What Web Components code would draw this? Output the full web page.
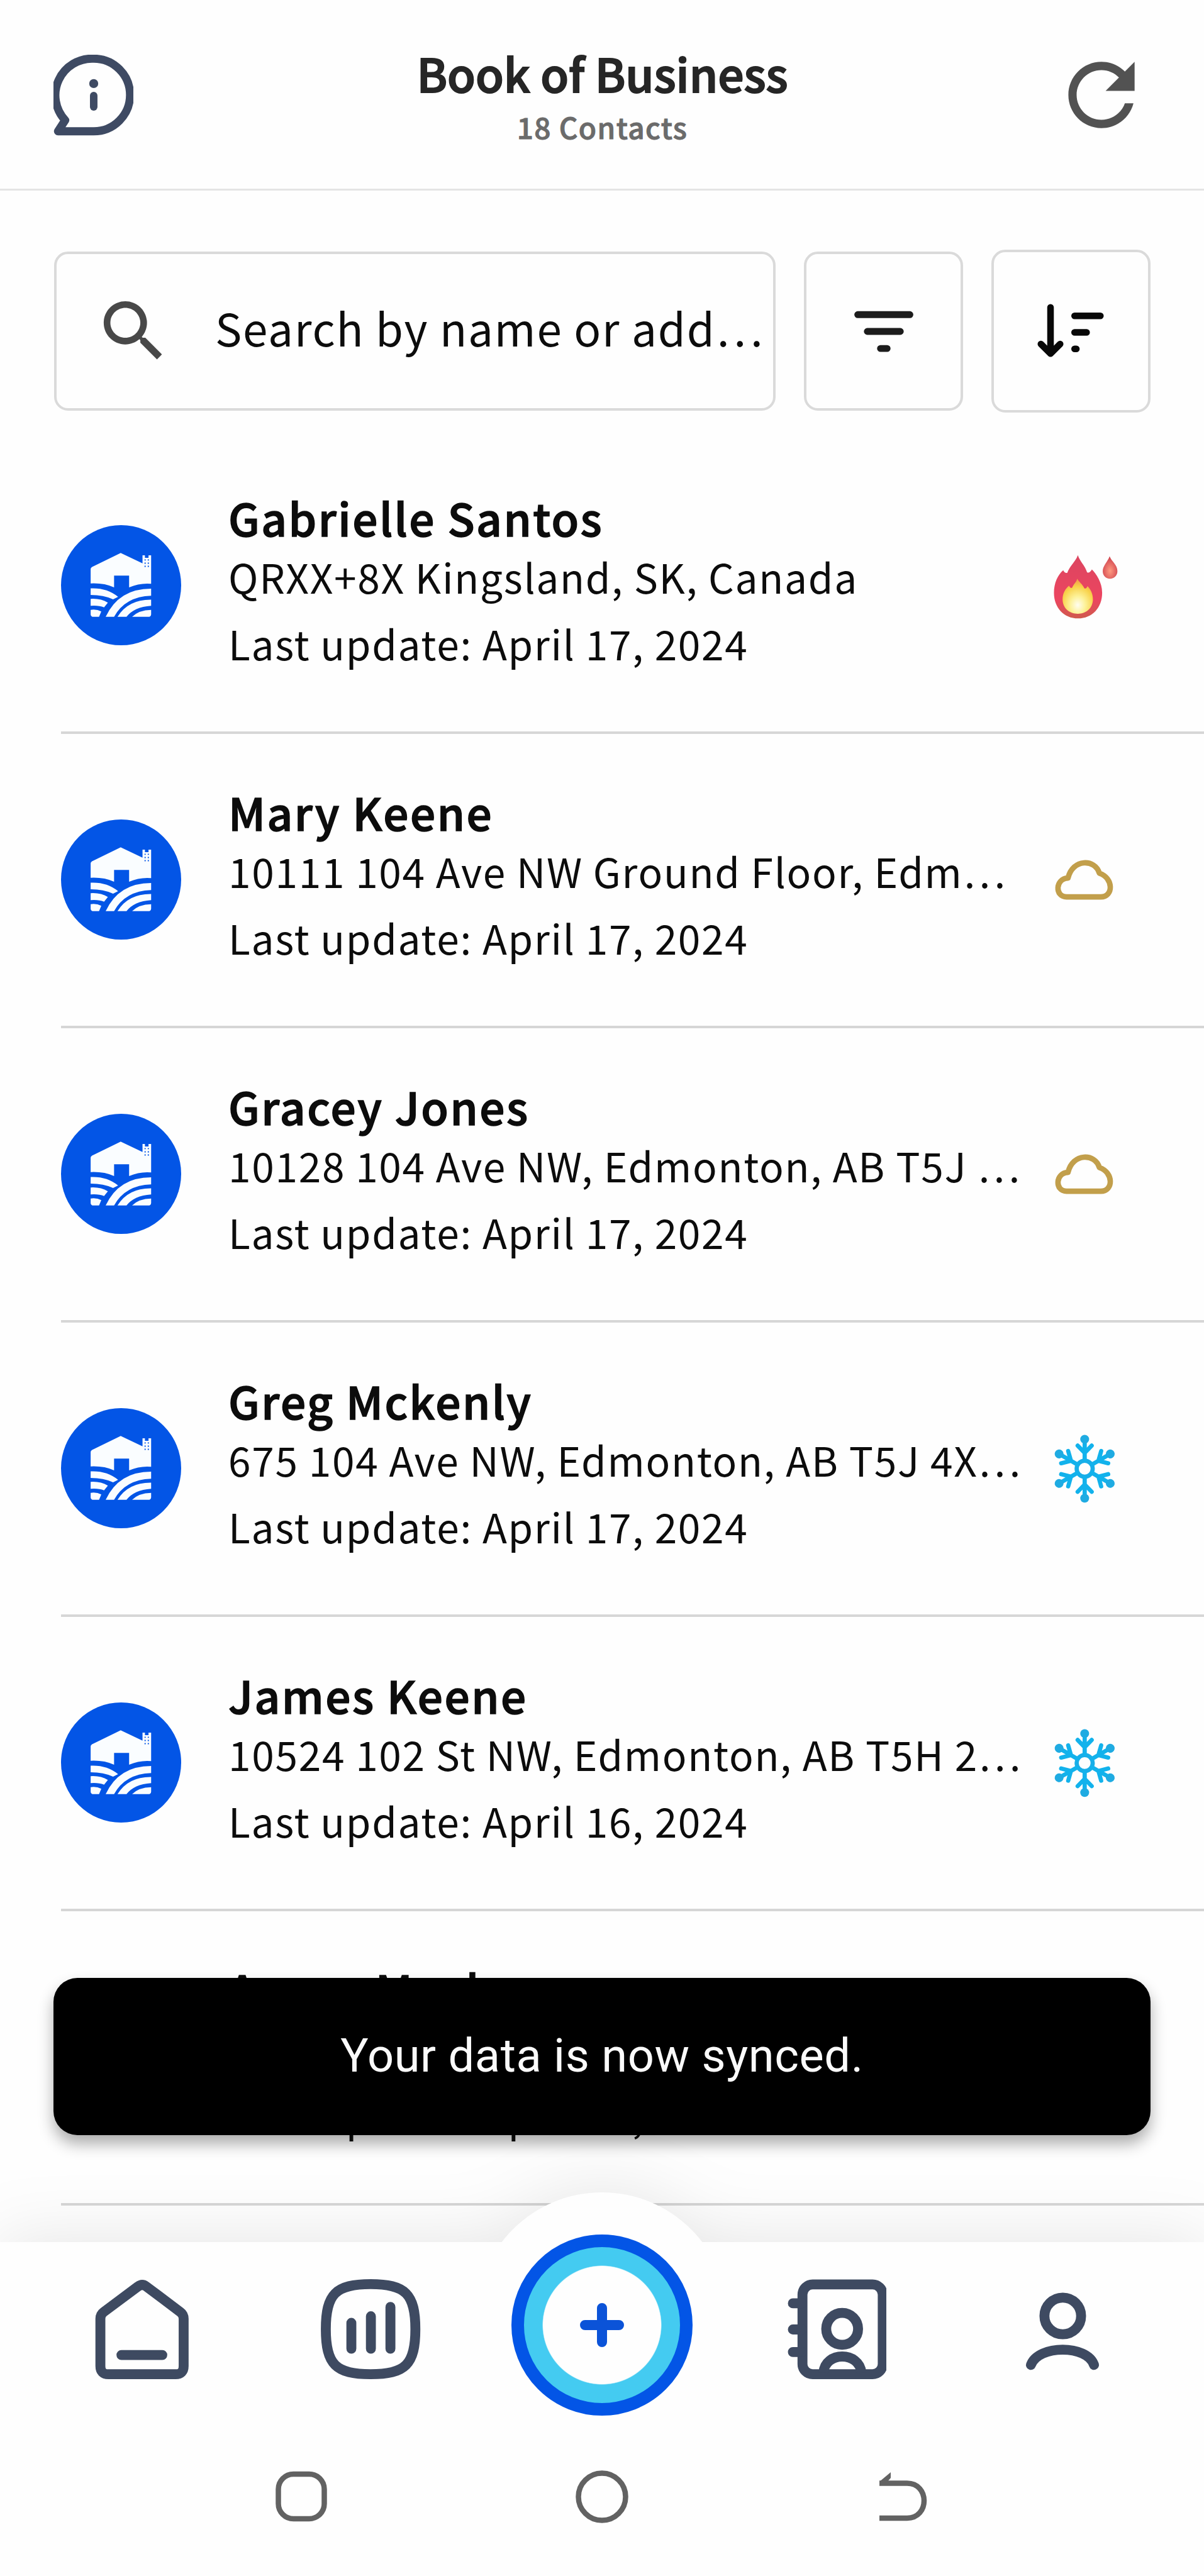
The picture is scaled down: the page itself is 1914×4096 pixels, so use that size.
<!DOCTYPE html>
<html lang="en">
<head>
<meta charset="utf-8">
<title>Book of Business</title>
<style>
    body {
        margin: 0;
        background: #fefefe;
        font-family: "Noto Sans CJK SC", "Noto Sans", sans-serif;
        color: #0c0c0c;
    }
</style>
</head>
<body>
<book-app>
    <app-header slot="header" heading="Book of Business" count="18 Contacts"></app-header>
    <search-bar slot="search">Search by name or add…</search-bar>

    <contact-row name="Gabrielle Santos" address="QRXX+8X Kingsland, SK, Canada" updated="April 17, 2024" status="hot"></contact-row>
    <contact-row name="Mary Keene" address="10111 104 Ave NW Ground Floor, Edm…" updated="April 17, 2024" status="warm"></contact-row>
    <contact-row name="Gracey Jones" address="10128 104 Ave NW, Edmonton, AB T5J …" updated="April 17, 2024" status="warm"></contact-row>
    <contact-row name="Greg Mckenly" address="675 104 Ave NW, Edmonton, AB T5J 4X…" updated="April 17, 2024" status="cold"></contact-row>
    <contact-row name="James Keene" address="10524 102 St NW, Edmonton, AB T5H 2…" updated="April 16, 2024" status="cold"></contact-row>
    <contact-row name="Aaron Mack" address="" updated="April 16, 2024" covered></contact-row>

    <toast-message slot="toast">Your data is now synced.</toast-message>
    <bottom-nav slot="nav"></bottom-nav>
    <system-nav slot="system"></system-nav>
</book-app>

<script>
const makeTemplate = (html) => {
    const template = document.createElement('template');
    template.innerHTML = html;
    return template;
};

// ---------- icons ----------
const snowArm = `
    <path d="M425 198V105M425 163L390 127M425 163L460 127" fill="none" stroke="#12b2ec" stroke-width="21" stroke-linecap="round"/>
    <circle cx="425" cy="95" r="22" fill="#1fabe2"/>`;

const icons = {
    info: ['89 91 133 135', `
        <path d="M156 97.500a60 60 0 0 1 0 121H96.500L108.500 200A61 61 0 0 1 156 97.500Z" fill="none" stroke="#3e4a63" stroke-width="13.500" stroke-linejoin="round"/>
        <circle cx="156" cy="139" r="7.500" fill="#3e4a63"/>
        <path d="M156 159v19" stroke="#3e4a63" stroke-width="12.500" stroke-linecap="round"/>`],
    refresh: ['0 0 24 24', `<path fill="#525252" d="M17.650 6.350C16.200 4.900 14.210 4 12 4c-4.420 0-7.990 3.580-7.990 8s3.570 8 7.990 8c3.730 0 6.840-2.550 7.730-6h-2.080c-.82 2.330-3.040 4-5.650 4-3.310 0-6-2.690-6-6s2.690-6 6-6c1.660 0 3.140.69 4.220 1.780L13 11h7V4l-2.350 2.350z"/>`],
    search: ['0 0 24 24', `<path fill="#484848" d="M15.500 14h-.79l-.28-.27C15.410 12.590 16 11.110 16 9.500 16 5.910 13.090 3 9.500 3S3 5.910 3 9.500 5.910 16 9.500 16c1.610 0 3.090-.59 4.230-1.570l.27.28v.79l5 4.990L20.490 19l-4.990-5zm-6 0C7.010 14 5 11.990 5 9.500S7.010 5 9.500 5 14 7.010 14 9.500 11.990 14 9.500 14z"/>`],
    filter: ['0 0 100 84', `<g stroke="#1c1c1c" stroke-width="11.500" stroke-linecap="round"><path d="M6.500 14h87M22.500 42h55M44.500 70.500h11"/></g>`],
    sort: ['0 0 112 92', `
        <g fill="none" stroke="#080808" stroke-width="11" stroke-linecap="round" stroke-linejoin="round">
            <path d="M22 6v76M6 67l16 16 16-16"/>
            <path d="M62 20h43M62 47.500h20M62 75h3"/>
        </g>`],
    hot: ['236 91 376 376', `
        <defs>
            <linearGradient id="outer" x1="0" y1="0" x2="0" y2="1"><stop offset="0" stop-color="#dc4560"/><stop offset=".7" stop-color="#ec4560"/><stop offset="1" stop-color="#cf5a4c"/></linearGradient>
            <radialGradient id="inner" cx=".5" cy=".75" r=".7"><stop offset="0" stop-color="#fffdf0"/><stop offset=".35" stop-color="#fdf29a"/><stop offset=".75" stop-color="#f8d24a"/><stop offset="1" stop-color="#f3a24c"/></radialGradient>
            <radialGradient id="spark" cx=".5" cy=".65" r=".6"><stop offset="0" stop-color="#ff9a80"/><stop offset="1" stop-color="#d0444f"/></radialGradient>
        </defs>
        <path fill="url(#outer)" d="M391 128C402 160 425 178 437 213C444 218 452 214 461 199C482 220 512 262 512 315C512 390 462 443 392 443C322 443 272 390 272 315C272 268 290 227 318 203C323 213 330 218 338 216C352 180 380 160 391 128Z"/>
        <path fill="url(#inner)" d="M388 245C398 262 412 270 423 292C430 297 435 291 439 282C455 298 466 320 466 348C466 390 434 420 391 420C347 420 315 390 315 348C315 318 328 296 347 280C352 290 357 294 363 289C370 270 383 264 388 245Z"/>
        <path fill="url(#spark)" d="M549 133C560 160 588 175 588 207C588 230 572 245 551 245C530 245 515 230 515 207C515 180 540 160 549 133Z"/>`],
    warm: ['236 57 376 376', `<path fill="none" stroke="#c29f4b" stroke-width="27" stroke-linejoin="round" d="M335 330H505C569 330 570 236 498 212C478 140 365 138 342 236C278 238 275 330 335 330Z"/>`],
    cold: ['236 53 376 376', `
        <circle cx="425" cy="242" r="40" fill="none" stroke="#18aee8" stroke-width="21"/>
        ${[0, 60, 120, 180, 240, 300].map(a => `<g transform="rotate(${a} 425 242)">${snowArm}</g>`).join('')}`],
    house: ['17 15 600 600', `
        <circle cx="317" cy="315" r="300" fill="#0355e6"/>
        <g fill="#fafdff">
            <path d="M165 234Q165 228 172 224L315 154L424 206V166H436V178H454V166H467V308Q410 303 357 326V267H282V326Q232 303 165 306Z"/>
            <path d="M165 331Q245 327 302 373L277 386Q230 364 165 364Z"/>
            <path d="M165 383Q215 380 251 402L232 426Q205 415 165 418Z"/>
            <path d="M165 438Q195 434 218 446L207 473H180Q165 473 165 460Z"/>
            <path d="M240 473Q305 332 467 332V368Q338 372 282 473Z"/>
            <path d="M299 473Q352 386 467 387V418Q382 424 344 473Z"/>
            <path d="M372 473Q405 439 467 438V460Q467 473 452 473Z"/>
        </g>
        <g fill="#0355e6">
            <path d="M434 186h6v6h-6zM450 186h6v6h-6zM434 202h6v6h-6zM450 202h6v6h-6zM434 218h6v6h-6zM450 218h6v6h-6z"/>
        </g>`],
    home: ['146 3780 180 180', `<path d="M229 3798.500L172 3841Q166.500 3845 166.500 3852V3931Q166.500 3944.500 180 3944.500H291.500Q305 3944.500 305 3931V3852Q305 3845 299.500 3841L243 3798.500Q236 3793 229 3798.500ZM201.500 3912.500H269.500"/>`],
    chart: ['528 3780 180 180', `
        <path d="M615 3794.500C673 3794.500 689.500 3811 689.500 3869.500C689.500 3928 673 3944.500 615 3944.500C557 3944.500 540.500 3928 540.500 3869.500C540.500 3811 557 3794.500 615 3794.500Z"/>
        <path d="M583 3859V3902M615.500 3848V3902M648 3832.500V3902"/>`],
    book: ['1292.500 3780 180 180', `
        <rect x="1333" y="3795" width="133.500" height="149.500" rx="17"/>
        <path d="M1317 3826.500H1332M1317 3870H1332M1317 3907.500H1332"/>
        <circle cx="1399" cy="3869" r="26.500"/>
        <path stroke-linecap="butt" d="M1368 3942C1370 3906 1428 3906 1431 3942"/>`],
    person: ['1675 3780 180 180', `
        <circle cx="1765.500" cy="3847.500" r="30.500"/>
        <path d="M1712.500 3929C1725 3895 1806 3895 1817.500 3929"/>`],
};

class UiIcon extends HTMLElement {
    constructor() {
        super();
        this.attachShadow({mode: 'open'});
    }

    connectedCallback() {
        const [viewBox, shapes] = icons[this.getAttribute('name')];
        this.shadowRoot.innerHTML = `
            <style>
                :host { display: block; flex: none; }
                svg { display: block; width: 100%; height: 100%; }
            </style>
            <svg viewBox="${viewBox}">${shapes}</svg>
        `;
    }
}

// ---------- page shell ----------
const appTemplate = makeTemplate(`
    <style>
        :host {
            display: flex;
            flex-direction: column;
            position: relative;
            width: 1914px;
            height: 4096px;
            overflow: hidden;
        }
        main {
            height: 2866px;
            flex: none;
            overflow: hidden;
        }
        /* toast floats over the list */
        ::slotted([slot="toast"]) {
            position: absolute;
            left: 85px;
            right: 85px;
            top: 3145px;
            z-index: 3;
        }
    </style>
    <slot name="header"></slot>
    <slot name="search"></slot>
    <main><slot></slot></main>
    <slot name="nav"></slot>
    <slot name="system"></slot>
    <slot name="toast"></slot>
`);
class BookApp extends HTMLElement {
    constructor() {
        super();
        this.attachShadow({mode: 'open'});
        this.shadowRoot.appendChild(appTemplate.content.cloneNode(true));
    }
}

const headerTemplate = makeTemplate(`
    <style>
        :host {
            display: grid;
            grid-template-columns: 158px 1fr 158px;
            box-sizing: border-box;
            height: 303px;
            padding: 0 84px 0 85px;
            border-bottom: 3px solid #e4e4e4;
        }
        .info { width: 127px; height: 129px; margin-top: 87px; }
        .refresh { width: 158px; height: 158px; margin-top: 72px; }
        .titles { text-align: center; padding-top: 70px; }
        h1 {
            margin: 0 0 11px;
            font-size: 73px;
            line-height: 90px;
            font-weight: 500;
            color: #262626;
            -webkit-text-stroke: 2px #262626;
        }
        p {
            margin: 0;
            font-size: 46px;
            line-height: 60px;
            font-weight: 500;
            letter-spacing: 1.4px;
            color: #6b6b6b;
            -webkit-text-stroke: 1px #6b6b6b;
        }
    </style>
    <ui-icon class="info" name="info"></ui-icon>
    <div class="titles">
        <h1></h1>
        <p></p>
    </div>
    <ui-icon class="refresh" name="refresh"></ui-icon>
`);
class AppHeader extends HTMLElement {
    constructor() {
        super();
        this.attachShadow({mode: 'open'});
        this.shadowRoot.appendChild(headerTemplate.content.cloneNode(true));
        this.shadowRoot.querySelector('h1').textContent = this.getAttribute('heading');
        this.shadowRoot.querySelector('p').textContent = this.getAttribute('count');
    }
}

const searchTemplate = makeTemplate(`
    <style>
        :host {
            display: flex;
            align-items: center;
            gap: 45px;
            box-sizing: border-box;
            height: 396px;
            padding: 94px 85px 43px 86px;
        }
        .box {
            display: flex;
            align-items: center;
            justify-content: center;
            box-sizing: border-box;
            width: 253px;
            height: 253px;
            border: 4px solid #dadada;
            border-radius: 22px;
        }
        .field {
            flex: 1;
            width: auto;
            justify-content: flex-start;
            padding-left: 59px;
        }
        .field ui-icon { width: 127px; height: 127px; }
        .field span {
            margin-left: 66px;
            padding-bottom: 13px;
            font-size: 71px;
            line-height: 100px;
            letter-spacing: 1.8px;
            white-space: nowrap;
        }
        .sort { height: 259px; }
        .filter ui-icon { width: 96px; height: 80px; }
        .sort ui-icon { width: 107px; height: 88px; }
    </style>
    <div class="box field"><ui-icon name="search"></ui-icon><span><slot></slot></span></div>
    <div class="box filter"><ui-icon name="filter"></ui-icon></div>
    <div class="box sort"><ui-icon name="sort"></ui-icon></div>
`);
class SearchBar extends HTMLElement {
    constructor() {
        super();
        this.attachShadow({mode: 'open'});
        this.shadowRoot.appendChild(searchTemplate.content.cloneNode(true));
    }
}

const rowTemplate = makeTemplate(`
    <style>
        :host {
            display: flex;
            box-sizing: border-box;
            height: 468px;
            margin-left: 97px;
            border-bottom: 4px solid #d6d6d6;
        }
        .avatar { width: 191px; height: 191px; margin-top: 136px; }
        .text {
            flex: none;
            width: 1300px;
            margin-left: 75px;
            padding-top: 78px;
            white-space: nowrap;
        }
        h2, p { margin: 0; line-height: 90px; }
        h2 {
            font-size: 71px;
            font-weight: 500;
            letter-spacing: 2.5px;
            -webkit-text-stroke: 1.5px #0c0c0c;
        }
        p { font-size: 64px; letter-spacing: 1.7px; }
        .address { margin: 4px 0 16px; height: 90px; }
        .status { width: 120px; height: 120px; margin-top: 172px; margin-left: 1px; }
    </style>
    <ui-icon class="avatar" name="house"></ui-icon>
    <div class="text">
        <h2></h2>
        <p class="address"></p>
        <p class="updated"></p>
    </div>
`);
class ContactRow extends HTMLElement {
    constructor() {
        super();
        this.attachShadow({mode: 'open'});
        this.shadowRoot.appendChild(rowTemplate.content.cloneNode(true));

        this.shadowRoot.querySelector('h2').textContent = this.getAttribute('name');
        this.shadowRoot.querySelector('.address').textContent = this.getAttribute('address');
        this.shadowRoot.querySelector('.updated').textContent = `Last update: ${this.getAttribute('updated')}`;

        if (this.hasAttribute('covered')) {
            this.shadowRoot.querySelector('.avatar').style.visibility = 'hidden';
        }
        if (this.getAttribute('status')) {
            const status = document.createElement('ui-icon');
            status.className = 'status';
            status.setAttribute('name', this.getAttribute('status'));
            this.shadowRoot.appendChild(status);
        }
    }
}

const toastTemplate = makeTemplate(`
    <style>
        :host {
            display: flex;
            align-items: center;
            justify-content: center;
            height: 250px;
            border-radius: 38px;
            background: #000;
            color: #fafafa;
            font-family: Roboto, sans-serif;
            font-size: 74px;
            letter-spacing: .55px;
            box-shadow: 0 14px 24px rgba(0, 0, 0, .32);
        }
        span { padding-bottom: 3px; }
    </style>
    <span><slot></slot></span>
`);
class ToastMessage extends HTMLElement {
    constructor() {
        super();
        this.attachShadow({mode: 'open'});
        this.shadowRoot.appendChild(toastTemplate.content.cloneNode(true));
    }
}

const navTemplate = makeTemplate(`
    <style>
        :host {
            display: block;
            position: relative;
            height: 278px;
            flex: none;
            z-index: 1;
        }
        /* bar and bump share one shadow */
        .surface {
            position: absolute;
            inset: 0 0 -253px;
            filter: drop-shadow(0 0 55px rgba(0, 0, 0, .1));
        }
        .surface i {
            position: absolute;
            inset: 0;
            background: #fefefe;
        }
        .surface .bump {
            inset: -79px auto auto 757px;
            width: 400px;
            height: 400px;
            border-radius: 50%;
        }
        nav {
            position: relative;
            display: flex;
            justify-content: space-between;
            padding: 53px 139px 0 140px;
        }
        nav ui-icon {
            width: 172px;
            height: 172px;
            fill: none;
            stroke: #3e4a61;
            stroke-width: 16.5;
            stroke-linecap: round;
            stroke-linejoin: round;
        }
        .add { width: 172px; }
        .ring {
            position: absolute;
            left: 813px;
            top: -12px;
            box-sizing: border-box;
            width: 288px;
            height: 288px;
            border: 20px solid #0355e6;
            border-radius: 50%;
            background: radial-gradient(circle, #fefefe 93.5px, #44cbf1 95px);
            display: grid;
            place-items: center;
        }
        .ring svg { width: 70px; height: 70px; stroke: #0b53d8; stroke-width: 16; stroke-linecap: round; }
    </style>
    <div class="surface"><i></i><i class="bump"></i></div>
    <nav>
        <ui-icon name="home"></ui-icon>
        <ui-icon name="chart"></ui-icon>
        <span class="add"></span>
        <ui-icon name="book"></ui-icon>
        <ui-icon name="person"></ui-icon>
    </nav>
    <div class="ring"><svg viewBox="0 0 70 70"><path d="M35 8v54M8 35h54"/></svg></div>
`);
class BottomNav extends HTMLElement {
    constructor() {
        super();
        this.attachShadow({mode: 'open'});
        this.shadowRoot.appendChild(navTemplate.content.cloneNode(true));
    }
}

const systemTemplate = makeTemplate(`
    <style>
        :host {
            display: flex;
            justify-content: space-between;
            position: relative;
            z-index: 2;
            flex: 1;
            padding: 83px 435px 0;
        }
        svg {
            width: 88px;
            height: 88px;
            fill: none;
            stroke: #626262;
            stroke-width: 8.5;
        }
        .head { fill: #626262; stroke: none; }
    </style>
    <svg viewBox="0 0 88 88"><rect x="7.500" y="8" width="73" height="71" rx="24"/></svg>
    <svg viewBox="0 0 88 88"><circle cx="44" cy="44" r="37.500"/></svg>
    <svg viewBox="0 0 88 88"><path d="M7 22.500H51C87 22.500 87 78 51 78H7"/><path class="head" d="M7 20L25 5V14L18 22H7Z"/></svg>
`);
class SystemNav extends HTMLElement {
    constructor() {
        super();
        this.attachShadow({mode: 'open'});
        this.shadowRoot.appendChild(systemTemplate.content.cloneNode(true));
    }
}

window.customElements.define('ui-icon', UiIcon);
window.customElements.define('book-app', BookApp);
window.customElements.define('app-header', AppHeader);
window.customElements.define('search-bar', SearchBar);
window.customElements.define('contact-row', ContactRow);
window.customElements.define('toast-message', ToastMessage);
window.customElements.define('bottom-nav', BottomNav);
window.customElements.define('system-nav', SystemNav);
</script>
</body>
</html>
